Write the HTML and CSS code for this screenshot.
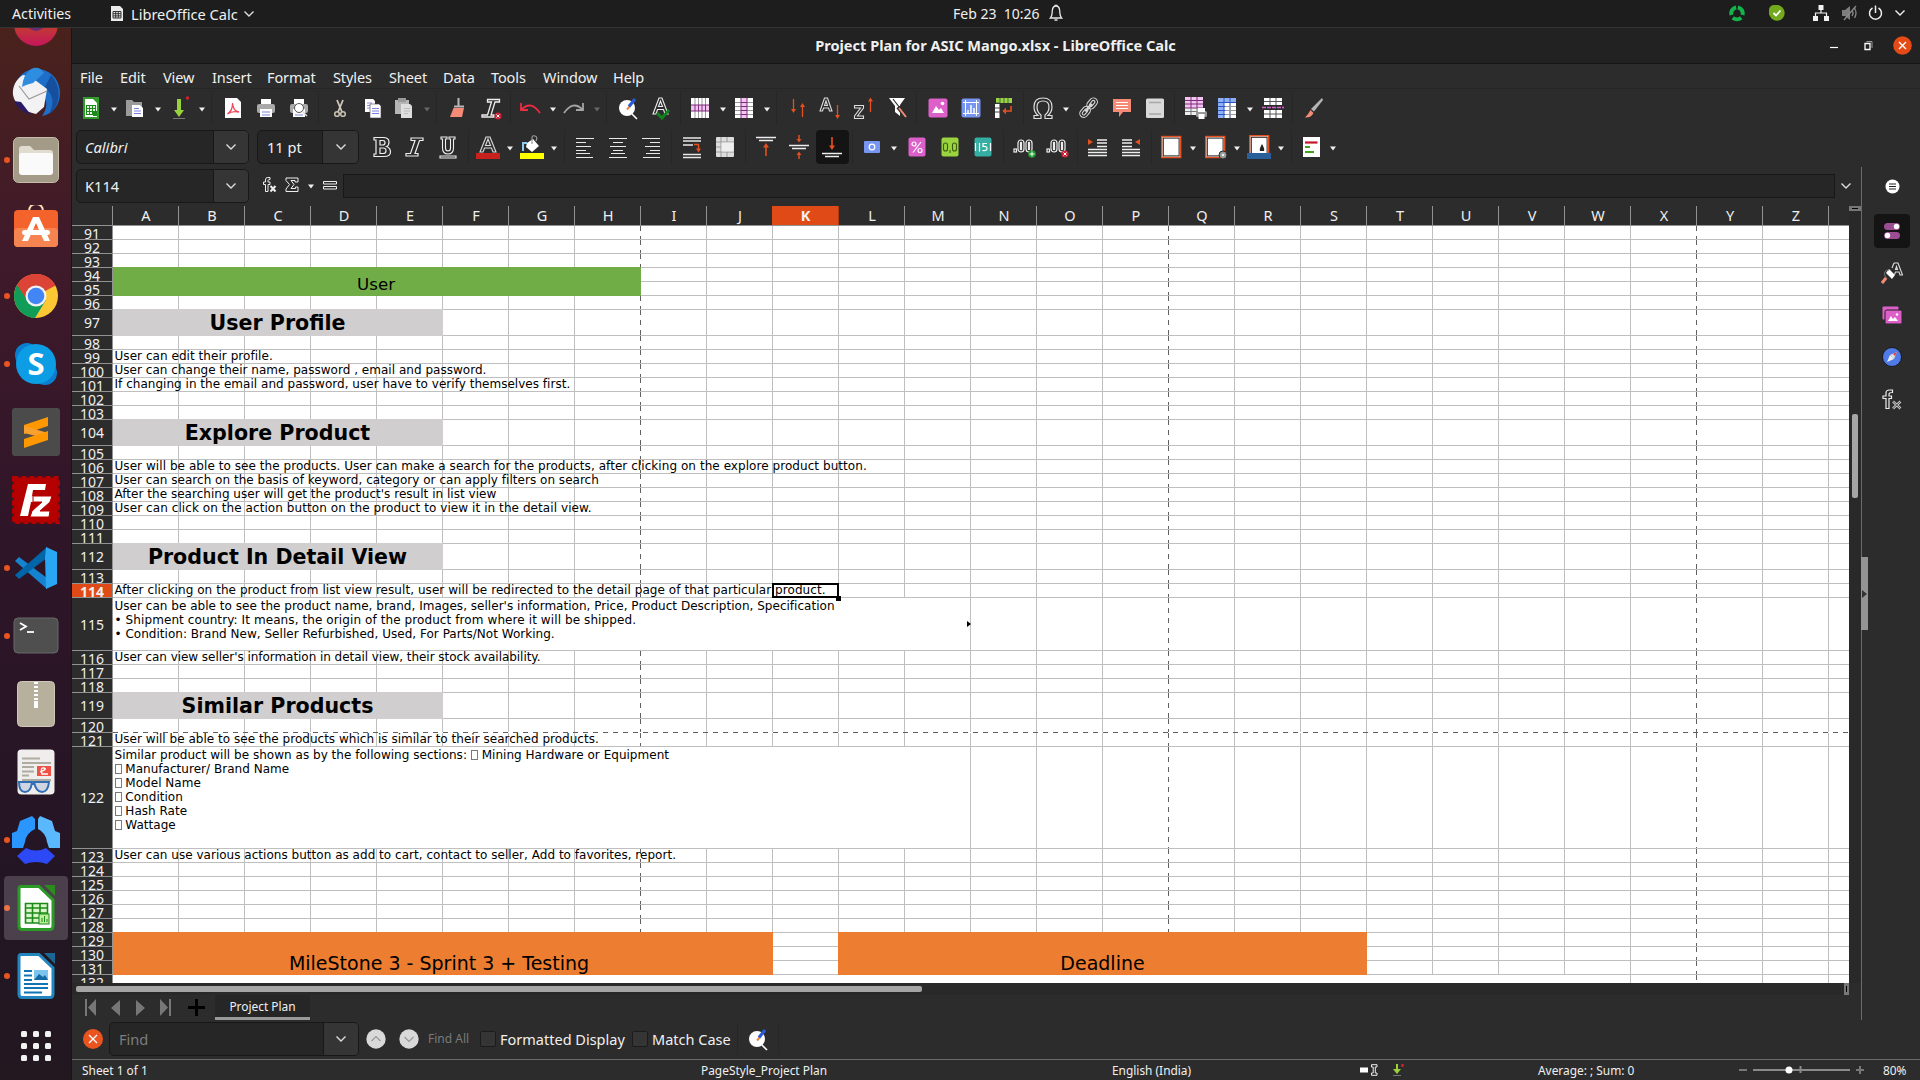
FILE: index.html
```html
<!DOCTYPE html>
<html lang="en">
<head>
<meta charset="utf-8">
<title>Project Plan for ASIC Mango.xlsx - LibreOffice Calc</title>
<link rel="stylesheet" href="styles.css">
</head>
<body>
<svg class="sprite" width="0" height="0">
  <symbol id="arrow" viewBox="0 0 6 5"><path d="M0 0.5H6L3 4.5Z" fill="currentColor"/></symbol>
  <symbol id="chev" viewBox="0 0 12 8"><path d="M1.5 1.5L6 6L10.5 1.5" fill="none" stroke="currentColor" stroke-width="1.4"/></symbol>
  <symbol id="findrep" viewBox="0 0 24 24"><circle cx="11" cy="12" r="8" fill="#fff"/><path d="M16 18L21 23" stroke="#fff" stroke-width="1.6"/><path d="M11 13.5L14 10" stroke="#f0883a" stroke-width="2"/><path d="M13 10.5L19 3" stroke="#2a5bd7" stroke-width="3.2"/></symbol>
  <symbol id="sheetrows" viewBox="0 0 24 24"><rect x="3" y="2" width="18" height="20" fill="#fff"/><path d="M7 2V22M10.500 2V22M14 2V22M17.500 2V22" stroke="#999"/><rect x="3" y="9" width="18" height="6" fill="#f3c4f0"/><path d="M3 9H21M3 15H21M7 9V15M10.500 9V15M14 9V15M17.500 9V15" stroke="#7c2d7a"/></symbol>
  <symbol id="sheetcols" viewBox="0 0 24 24"><rect x="3" y="2" width="18" height="20" fill="#fff"/><path d="M3 6.500H21M3 10.500H21M3 14.500H21M3 18.500H21" stroke="#999"/><rect x="9" y="2" width="6" height="20" fill="#f3c4f0"/><path d="M9 2V22M15 2V22M9 6.500H15M9 10.500H15M9 14.500H15M9 18.500H15" stroke="#7c2d7a"/></symbol>
</svg>

<header class="topbar">
  <span class="activities">Activities</span>
  <span class="appmenu">
    <svg width="12" height="15" viewBox="0 0 12 15"><path d="M0 0H9L12 3V15H0Z" fill="#ececec"/><path d="M2 5.500H10V12H2ZM2 7.700H10M2 9.900H10M4.700 5.500V12M7.300 5.500V12" fill="none" stroke="#333"/></svg>
    LibreOffice Calc
    <svg width="12" height="8"><use href="#chev"/></svg>
  </span>
  <span class="clock">Feb 23&nbsp; 10:26
    <svg width="14" height="18" viewBox="0 0 14 18"><path d="M1.500 14H12.500C10.500 12 11 9 10.700 6.500C10.400 3.500 9 2 7 2S3.600 3.500 3.300 6.500C3 9 3.500 12 1.500 14ZM5.500 16H8.500M5.500 1.500H8.500" fill="none" stroke="#e8e8e8" stroke-width="1.300"/></svg>
  </span>
  <span class="tray">
    <svg width="18" height="18" viewBox="0 0 18 18"><g fill="none" stroke="#15b34c" stroke-width="4"><path d="M9.800 3.500A6 6 0 0 1 14.600 11"/><path d="M8.200 3.500A6 6 0 0 0 3.400 11"/><path d="M4.800 13.800A6.500 6.500 0 0 0 13.200 13.800"/></g></svg>
    <svg width="18" height="18" viewBox="0 0 18 18"><rect x="1" y="1" width="13" height="13" rx="5" fill="#73a91d"/><circle cx="9" cy="9" r="7.700" fill="#73a91d"/><path d="M5.500 9L8 11.500L12.500 6.500" fill="none" stroke="#fff" stroke-width="1.800"/></svg>
    <svg width="16" height="16" viewBox="0 0 16 16"><g fill="#f2f2f2"><rect x="5.500" y="0" width="5" height="5"/><rect x="0" y="11" width="5" height="5"/><rect x="11" y="11" width="5" height="5"/></g><path d="M8 5V8M2.500 11V8H13.500V11" fill="none" stroke="#f2f2f2" stroke-width="1.200"/></svg>
    <svg width="16" height="16" viewBox="0 0 16 16"><path d="M0 5H3L8 1V15L3 11H0Z" fill="#7d7d7d"/><path d="M10 5Q12 8 10 11M12.500 3Q15.500 8 12.500 13M14 1L2 15" fill="none" stroke="#8a8a8a" stroke-width="1.300"/></svg>
    <svg width="15" height="16" viewBox="0 0 15 16"><path d="M4.500 3A6 6 0 1 0 10.500 3M7.500 0.500V8" fill="none" stroke="#eee" stroke-width="1.500"/></svg>
    <svg width="12" height="8"><use href="#chev"/></svg>
  </span>
</header>

<div class="desktop">
<nav class="dock">
  <div class="app"><svg width="48" height="48" viewBox="0 0 48 48"><defs><linearGradient id="fx" x1="0" y1="0" x2="0" y2="1"><stop offset=".5" stop-color="#c0402a"/><stop offset="1" stop-color="#c6155e"/></linearGradient></defs><circle cx="24" cy="24" r="22" fill="url(#fx)"/><circle cx="24" cy="21" r="10" fill="#6d2c70"/></svg></div>
  <div class="app"><svg width="50" height="50" viewBox="0 0 50 50"><path d="M25 2C40 2 49 13 49 26C49 38 42 47 31 49C36 42 36 36 34 32L6 14C10 6 17 2 25 2Z" fill="#1f6fc9"/><path d="M40 8C50 18 51 38 38 47C44 36 42 28 34 20Z" fill="#164f9e"/><path d="M2 28C1 20 5 12 12 8L20 10L36 22L33 40L25 47C12 44 4 38 2 28Z" fill="#f2f2f4"/><path d="M8 19L18 32L36 24" fill="none" stroke="#999" stroke-width="1.200"/><path d="M20 2Q28 -2 33 6L22 16Q14 18 11 20Q12 8 20 2Z" fill="#2f8de0"/><path d="M3 34Q8 44 20 48L10 35Z" fill="#2a1a66"/></svg></div>
  <div class="app run"><svg width="46" height="46" viewBox="0 0 46 46"><rect x=".5" y=".5" width="45" height="45" rx="5" fill="#a39b87" stroke="#c5bda9"/><path d="M6 12Q6 9 9 9H17L21 13H37Q40 13 40 16V20H6Z" fill="#e0dccf"/><rect x="6" y="16" width="34" height="22" rx="3" fill="#fafafa"/></svg></div>
  <div class="app"><svg width="46" height="46" viewBox="0 0 46 46"><path d="M16 7Q16 -1 23 -1T30 7" fill="none" stroke="#f4dcb4" stroke-width="2"/><rect x="1" y="5" width="44" height="37" rx="4" fill="#f4632c"/><rect x="1" y="23" width="44" height="19" rx="4" fill="#f68450"/><path d="M20 12H26L37 36H31L23 18L15 36H9Z" fill="#fff"/><rect x="9" y="25" width="28" height="5" rx="2.500" fill="#fff"/></svg></div>
  <div class="app run"><svg width="46" height="46" viewBox="0 0 46 46"><circle cx="23" cy="23" r="22" fill="#fcc934"/><path d="M23 23L42.500 12.500A22 22 0 0 0 4 12Z" fill="#db4437"/><path d="M23 23L4 12A22 22 0 0 0 22 45L33 27Z" fill="#0f9d58"/><path d="M23 13H42.700A22 22 0 0 0 4 12L14 27Z" fill="#db4437"/><circle cx="23" cy="23" r="10.500" fill="#f1f1f1"/><circle cx="23" cy="23" r="8.300" fill="#4285f4"/></svg></div>
  <div class="app run"><svg width="46" height="46" viewBox="0 0 46 46"><circle cx="14" cy="14" r="12" fill="#0a7fd0"/><circle cx="32" cy="32" r="12" fill="#0a7fd0"/><circle cx="23" cy="23" r="20" fill="#0c9de4"/><text x="23" y="34" class="logo" font-size="31">S</text></svg></div>
  <div class="app"><svg width="48" height="48" viewBox="0 0 48 48"><rect width="48" height="48" rx="3" fill="#4b4b4b"/><path d="M12 17L36 9V18L12 26Z" fill="#ff9800"/><path d="M12 18L36 25V31L12 25Z" fill="#f9a12f"/><path d="M12 31L36 23V32L12 40Z" fill="#ff9800"/></svg></div>
  <div class="app"><svg width="48" height="48" viewBox="0 0 48 48"><rect x="1.500" y="1.500" width="45" height="45" fill="#b50000" stroke="#b50000" stroke-width="3" stroke-dasharray="5 3"/><path d="M16 8H34L33 14H21L20 20H29L28 26H19L16 40H8Z" fill="#fff"/><path d="M21 20H40L38 26L28 35H38L37 41H18L20 35L30 26H21Z" fill="#fff" stroke="#b50000"/></svg></div>
  <div class="app run"><svg width="44" height="44" viewBox="0 0 44 44"><path d="M1 15L5 11L33 32V43Z" fill="#1583d0"/><path d="M1 29L5 33L33 12V1Z" fill="#0065a9"/><path d="M32 1L43 6V38L32 43L31 12Z" fill="#2aa7f2"/></svg></div>
  <div class="app run"><svg width="46" height="38" viewBox="0 0 46 38"><rect x="1" y="1" width="44" height="35" rx="4" fill="#4f4f4f" stroke="#686868"/><path d="M7 6L13 9.500L7 13" fill="none" stroke="#fff" stroke-width="1.800"/><path d="M14 15H21" stroke="#fff" stroke-width="1.800"/></svg></div>
  <div class="app"><svg width="38" height="46" viewBox="0 0 38 46"><rect x=".5" y=".5" width="37" height="45" rx="4" fill="#b7b09d" stroke="#cfc9b8"/><path d="M19 1V21" stroke="#fff" stroke-width="4" stroke-dasharray="2 2"/><rect x="17" y="20" width="4" height="7" fill="#fff"/></svg></div>
  <div class="app"><svg width="38" height="46" viewBox="0 0 38 46"><rect x=".5" y=".5" width="37" height="45" rx="4" fill="#efeeec"/><path d="M5 9.500H23M5 14H34M5 18H17M5 22.500H17M5 26.500H12M5 31H34" stroke="#b0aba0" stroke-width="2"/><rect x="20" y="17" width="14" height="10" fill="#ee5145"/><path d="M23 23Q31 20 27 19T25 25H31" fill="none" stroke="#fff" stroke-width="1.300"/><path d="M2 33H15Q14 43 8 43T2 33ZM17 33H32Q31 43 25 43T17 33ZM15 35H18" fill="#cfd6e2" stroke="#2f6db5" stroke-width="2"/></svg></div>
  <div class="app run"><svg width="50" height="50" viewBox="0 0 50 50"><path d="M9 6L21 1L24 4V14Q15 18 14 27L12 33H1V18L6 16Z" fill="#2a96ff"/><path d="M41 6L29 1L27 4V14Q35 18 36 27L38 33H49V18L44 16Z" fill="#5ab8ff"/><path d="M6 41L15 33Q25 38 35 33L44 41L36 49Q25 45 14 49Z" fill="#2d49f5"/></svg></div>
  <div class="app run active"><svg width="38" height="46" viewBox="0 0 38 46"><path d="M4 1.500H22L36 15V41Q36 44.500 33 44.500H5Q2 44.500 2 41V4Q2 1.500 4 1.500Z" fill="#fff" stroke="#2c9a26" stroke-width="3"/><path d="M27 0H38V11Z" fill="#2c8a1e"/><path d="M8.500 18.500H30.500V38H8.500ZM8.500 23H30.500M8.500 28H30.500M8.500 33H30.500M15.500 18.500V38M23 18.500V38" fill="#d9f7cb" stroke="#1c8a18" stroke-width="1.600"/><rect x="22" y="29" width="10" height="10" fill="#b9ee9a" stroke="#1c8a18"/><path d="M25 37V33M27.500 37V31M30 37V34" stroke="#1c8a18"/></svg></div>
  <div class="app run"><svg width="38" height="46" viewBox="0 0 38 46"><path d="M4 1.500H22L36 15V41Q36 44.500 33 44.500H5Q2 44.500 2 41V4Q2 1.500 4 1.500Z" fill="#fff" stroke="#2285bd" stroke-width="3"/><path d="M27 0H38V11Z" fill="#1a6796"/><path d="M7 18H15M7 22.500H15M7 27H15M7 31H31M7 35H31M7 39.500H25" stroke="#0f75b5" stroke-width="2"/><rect x="17" y="17" width="14" height="10" fill="#7cc4ee"/><path d="M17 27L22 21L26 24L28 22L31 27Z" fill="#1268a3"/></svg></div>
  <div class="app"><svg width="30" height="30" viewBox="0 0 30 30" fill="#f2f2f2"><rect width="6" height="6" rx="1.500"/><rect x="12" width="6" height="6" rx="1.500"/><rect x="24" width="6" height="6" rx="1.500"/><rect y="12" width="6" height="6" rx="1.500"/><rect x="12" y="12" width="6" height="6" rx="1.500"/><rect x="24" y="12" width="6" height="6" rx="1.500"/><rect y="24" width="6" height="6" rx="1.500"/><rect x="12" y="24" width="6" height="6" rx="1.500"/><rect x="24" y="24" width="6" height="6" rx="1.500"/></svg></div>
</nav>

<main class="window">
  <div class="titlebar">
    <span class="title">Project Plan for ASIC Mango.xlsx - LibreOffice Calc</span>
    <span class="controls">
      <svg width="8" height="16" viewBox="0 0 8 16"><path d="M0 10.500H8" stroke="#fff" stroke-width="1.200"/></svg>
      <svg width="9" height="12" viewBox="0 0 9 12"><path d="M1 4.500H6V10.500H1Z" fill="none" stroke="#fff" stroke-width="1.300"/><path d="M2.500 2.500H8V9" fill="none" stroke="#999"/></svg>
      <svg width="19" height="19" viewBox="0 0 19 19"><circle cx="9.500" cy="9.500" r="9.300" fill="#e54b17"/><path d="M6 6L13 13M13 6L6 13" stroke="#fff" stroke-width="1.400"/></svg>
    </span>
  </div>
  <div class="menubar"><span class="m1">File</span><span class="m2">Edit</span><span class="m3">View</span><span class="m4">Insert</span><span class="m5">Format</span><span class="m6">Styles</span><span class="m7">Sheet</span><span class="m8">Data</span><span class="m9">Tools</span><span class="m10">Window</span><span>Help</span></div>

  <div class="toolbar standard">
    <div class="grp">
      <i class="dd"><svg class="ic" viewBox="0 0 24 24"><path d="M4 1H20V23H4Z" fill="#2f9a26"/><path d="M6 3H14L18 7V21H6Z" fill="#fff"/><path d="M7.500 9.500H16.500V18.500H7.500ZM7.500 12.500H16.500M7.500 15.500H16.500M10.500 9.500V18.500M13.500 9.500V18.500" fill="none" stroke="#1c8a18" stroke-width="1.200"/><path d="M14 15H18V20H14Z" fill="#1c8a18"/></svg><svg class="ar"><use href="#arrow"/></svg></i>
      <i class="dd"><svg class="ic" viewBox="0 0 24 24"><path d="M3 4H9L11 6H19V20H3Z" fill="#9b9b9b"/><path d="M9 9H17L20 12V21H9Z" fill="#fff"/><path d="M11 12.500H16M11 15H18M11 17.500H18" stroke="#7d83dd"/></svg><svg class="ar"><use href="#arrow"/></svg></i>
      <i class="dd"><svg class="ic" viewBox="0 0 24 24"><path d="M10 3H14V14H17L12 21L7 14H10Z" fill="#98d33b"/><path d="M6 22.500H18" stroke="#777"/><circle cx="20.500" cy="2" r="1.700" fill="#d6212f"/></svg><svg class="ar"><use href="#arrow"/></svg></i>
    </div>
    <div class="grp">
      <i><svg class="ic" viewBox="0 0 24 24"><path d="M4 2H16L20 6V22H4Z" fill="#fff"/><path d="M6.500 18Q12 14 11.500 7Q12 15 18 16Q11 14.500 6.500 18" fill="none" stroke="#f0475b" stroke-width="1.300"/></svg></i>
      <i><svg class="ic" viewBox="0 0 24 24"><path d="M7 3H17V8H7Z" fill="#fff"/><rect x="3" y="8" width="18" height="9" rx="2" fill="#a9a9a9"/><path d="M6 13H18V21H6Z" fill="#fff"/><path d="M8 16H16M8 19H16" stroke="#7d83dd"/></svg></i>
      <i><svg class="ic" viewBox="0 0 24 24"><path d="M7 3H17V8H7Z" fill="#fff"/><rect x="3" y="8" width="18" height="9" rx="2" fill="#a9a9a9"/><path d="M6 13H18V21H6Z" fill="#fff"/><path d="M8 19H16" stroke="#7d83dd"/><circle cx="12" cy="12" r="4.500" fill="#fff" stroke="#555"/><path d="M15.500 15.500L20 20" stroke="#ddd" stroke-width="1.500"/></svg></i>
    </div>
    <div class="grp">
      <i><svg class="ic" viewBox="0 0 24 24"><path d="M9 4L14 16M15 4L10 16" stroke="#cfc7ba" stroke-width="1.800"/><circle cx="9" cy="18" r="2.300" fill="none" stroke="#c5bdb0" stroke-width="1.600"/><circle cx="15" cy="18" r="2.300" fill="none" stroke="#c5bdb0" stroke-width="1.600"/></svg></i>
      <i><svg class="ic" viewBox="0 0 24 24"><path d="M4 3H12L14 5V16H4Z" fill="#fff"/><path d="M6 7H11M6 9.500H9M6 12H9" stroke="#8b90e0"/><path d="M9 8H18L20 10V22H9Z" fill="#fff" stroke="#444" stroke-width=".6"/><path d="M11 12.500H18M11 15H18M11 17.500H18" stroke="#7d83dd"/></svg></i>
      <i class="dd off"><svg class="ic" viewBox="0 0 24 24"><path d="M3 4H17V18H3Z" fill="#b5b5b5"/><rect x="6" y="2" width="8" height="4" fill="#999"/><path d="M9 8H18L20 10V22H9Z" fill="#dedede"/><path d="M12 12.500H18M12 15H18M12 17.500H16" stroke="#bbb"/></svg><svg class="ar"><use href="#arrow"/></svg></i>
    </div>
    <div class="grp">
      <i><svg class="ic" viewBox="0 0 24 24"><path d="M12.500 2V10M8 10.500H18" stroke="#b8b8b8" stroke-width="2"/><path d="M7.500 12H18L16 21H4Z" fill="#f58a76"/></svg></i>
      <i><svg class="ic" viewBox="0 0 24 24"><path d="M8.500 3.500H20.500V6H16L12 19H15V21H3V19H8.500L12.500 6H8.500Z" fill="none" stroke="#eee" stroke-width="1.300"/><circle cx="19" cy="20" r="3.500" fill="#d02236"/><path d="M17.500 18.500L20.500 21.500M20.500 18.500L17.500 21.500" stroke="#fff"/></svg></i>
    </div>
    <div class="grp">
      <i class="dd"><svg class="ic" viewBox="0 0 24 24"><path d="M3 7V14H10M3.500 13.500Q13 4 22 17" fill="none" stroke="#ef2b41" stroke-width="1.800"/></svg><svg class="ar"><use href="#arrow"/></svg></i>
      <i class="dd off"><svg class="ic" viewBox="0 0 24 24"><path d="M21 7V14H14M20.500 13.500Q11 4 2 17" fill="none" stroke="#a5a5a5" stroke-width="1.800"/></svg><svg class="ar"><use href="#arrow"/></svg></i>
    </div>
    <div class="grp">
      <i><svg class="ic"><use href="#findrep"/></svg></i>
      <i><svg class="ic" viewBox="0 0 24 24"><path d="M10 2H13L19 18H16L14.500 13.500H8.500L7 18H4ZM9.500 10.500H13.500L11.500 5Z" fill="none" stroke="#eee" stroke-width="1.100"/><path d="M8 17L13 22L20 14" fill="none" stroke="#12801e" stroke-width="3"/></svg></i>
    </div>
    <div class="grp">
      <i class="dd"><svg class="ic"><use href="#sheetrows"/></svg><svg class="ar"><use href="#arrow"/></svg></i>
      <i class="dd"><svg class="ic"><use href="#sheetcols"/></svg><svg class="ar"><use href="#arrow"/></svg></i>
    </div>
    <div class="grp">
      <i><svg class="ic" viewBox="0 0 24 24"><path d="M7.500 3V14M16.500 10V21" stroke="#e4501f" stroke-width="1.300"/><path d="M5 13H10L7.500 17ZM14 11H19L16.500 7Z" fill="#e4501f"/></svg></i>
      <i><svg class="ic" viewBox="0 0 24 24"><path d="M5.500 2H8.500L13 15H10.500L9.500 12H4.500L3.500 15H1ZM5.500 9.500H8.500L7 5Z" fill="none" stroke="#ddd" stroke-width="1.100"/><path d="M18.500 9V20" stroke="#e4501f" stroke-width="1.300"/><path d="M16 19H21L18.500 23Z" fill="#e4501f"/></svg></i>
      <i><svg class="ic" viewBox="0 0 24 24"><path d="M2.500 9.500H11.500V12L5.500 20H11.500V22.500H2.500V20L8.500 12H2.500Z" fill="none" stroke="#ddd" stroke-width="1.100"/><path d="M18.500 5V16" stroke="#e4501f" stroke-width="1.300"/><path d="M16 5.500H21L18.500 1.500Z" fill="#e4501f"/></svg></i>
      <i><svg class="ic" viewBox="0 0 24 24"><path d="M4 2H20L15 9V20L10 16V10Z" fill="#fff"/><path d="M8 3L21 20" stroke="#2c2c2c" stroke-width="1.200"/><path d="M13 11L21 21" stroke="#2c2c2c" stroke-width="4"/><path d="M14 12L21 21" stroke="#f58a76" stroke-width="2"/></svg></i>
    </div>
    <div class="grp">
      <i><svg class="ic" viewBox="0 0 24 24"><rect x="2.500" y="2.500" width="19" height="19" rx="2" fill="#dc5fca"/><path d="M6 17L10 10L13 14L15 12L18 17Z" fill="#fff"/><circle cx="16.500" cy="7.500" r="1.800" fill="#fff"/></svg></i>
      <i><svg class="ic" viewBox="0 0 24 24"><rect x="2.500" y="2.500" width="19" height="19" rx="2" fill="#7796f2"/><path d="M6.500 4V20M17.500 4V20M4 6.500H20M4 17.500H20" stroke="#fff"/><path d="M9 17V14M12 17V9M15 17V12" stroke="#fff" stroke-width="1.500"/></svg></i>
      <i><svg class="ic" viewBox="0 0 24 24"><path d="M4 2H20V7H4Z" fill="#9ad43f"/><path d="M8 2V7M12 2V7M16 2V7M4 7H8" stroke="#355" stroke-width=".8"/><path d="M3 8H7.500V22H3Z" fill="#fff"/><path d="M3 12H8M3 16H8" stroke="#444"/><path d="M19 10V15H13" fill="none" stroke="#e4501f" stroke-width="1.600"/><path d="M14 11.500V18.500L10.500 15Z" fill="#e4501f"/></svg></i>
    </div>
    <div class="grp">
      <i class="dd"><svg class="ic" viewBox="0 0 24 24"><path d="M3 19.500H7Q3 16 3 11Q3 2 12 2T21 11Q21 16 17 19.500H21V22.500H14V19Q18 16 18 11Q18 5 12 5T6 11Q6 16 10 19V22.500H3Z" fill="none" stroke="#ddd" stroke-width="1.200"/></svg><svg class="ar"><use href="#arrow"/></svg></i>
      <i><svg class="ic" viewBox="0 0 24 24"><g transform="rotate(-50 12 12)" fill="none" stroke="#d5d5d5" stroke-width="1.100"><rect x="0.500" y="7.500" width="12" height="8" rx="4"/><rect x="3" y="10" width="7" height="3" rx="1.500"/><rect x="11.500" y="7.500" width="12" height="8" rx="4"/><rect x="14" y="10" width="7" height="3" rx="1.500"/><path d="M7 11.500H17" stroke-width="2.500"/></g></svg></i>
      <i><svg class="ic" viewBox="0 0 24 24"><path d="M3 3H21V16H13L9 21V16H3Z" fill="#f58a76"/><path d="M6 6.500H18M6 9.500H18M6 12.500H18" stroke="#fff"/></svg></i>
      <i><svg class="ic" viewBox="0 0 24 24"><rect x="3" y="2.500" width="18" height="19.500" rx="1.500" fill="#dadada"/><path d="M6 6.500H18M6 18H18" stroke="#a8a8a8" stroke-width="1.500"/></svg></i>
    </div>
    <div class="grp">
      <i><svg class="ic" viewBox="0 0 24 24"><rect x="1" y="1" width="18" height="11" fill="#f3c4f0"/><rect x="1" y="12" width="18" height="7" fill="#eee"/><path d="M1 4.500H19M1 8H19M1 12H19M7 1V12M13 1V12" stroke="#7c2d7a"/><path d="M1 15.500H19M7 12V19M13 12V19" stroke="#777"/><rect x="12" y="15" width="11" height="6" rx="1.500" fill="#999"/><rect x="14" y="12" width="7" height="4" fill="#fff"/><rect x="14.500" y="18" width="6" height="5" fill="#fff"/></svg></i>
      <i class="dd"><svg class="ic" viewBox="0 0 24 24"><rect x="3" y="2" width="18" height="20" fill="#fff"/><path d="M3 2H21V6H9V22H3Z" fill="#8fb0f4"/><path d="M3 6.500H21M3 10.500H21M3 14.500H21M3 18.500H21M9 2V22M15 2V22" stroke="#2a55c4"/><path d="M10 10.500H21M10 14.500H21M10 18.500H21M15 7V22" stroke="#999"/></svg><svg class="ar"><use href="#arrow"/></svg></i>
      <i><svg class="ic" viewBox="0 0 24 24"><path d="M3 2H21V9H3ZM3 14H21V22H3Z" fill="#fff"/><path d="M3 5.500H21M3 18H21M9 2V9M15 2V9M9 14V22M15 14V22" stroke="#555"/><path d="M1 11.500H23" stroke="#d45fc5" stroke-width="1.600" stroke-dasharray="4 1"/></svg></i>
    </div>
    <div class="grp">
      <i><svg class="ic" viewBox="0 0 24 24"><path d="M20 2L9 13L12 15.500L21 4Z" fill="#b5b5b5"/><path d="M8.500 14L11.500 17Q9 22 3 21.500Q6 19 8.500 14Z" fill="#f58a76"/></svg></i>
    </div>
  </div>

  <div class="toolbar format">
    <div class="combo font"><span class="ital">Calibri</span><b><svg width="12" height="8"><use href="#chev"/></svg></b></div>
    <div class="combo size"><span>11 pt</span><b><svg width="12" height="8"><use href="#chev"/></svg></b></div>
    <div class="grp">
      <i><svg class="ic" viewBox="0 0 24 24"><path d="M4 2.500H13Q19 2.500 19 7Q19 10.500 16.500 11.500Q20.500 13 20.500 17Q20.500 21.500 14 21.500H4V19H6V5H4ZM10 5.500V10H12.500Q15 10 15 7.700T12.500 5.500ZM10 13V18.500H13Q16 18.500 16 15.700T13 13Z" fill="none" stroke="#eee" stroke-width="1.200"/></svg></i>
      <i><svg class="ic" viewBox="0 0 24 24"><path d="M8 3H20V5.500H16.500L12 18.500H15V21H3V18.500H7.500L12 5.500H8Z" fill="none" stroke="#eee" stroke-width="1.200"/></svg></i>
      <i><svg class="ic" viewBox="0 0 24 24"><path d="M5 2H11V4H9.500V13Q9.500 16 12 16T14.500 13V4H13V2H19V4H17.500V13Q17.500 19 12 19T6.500 13V4H5ZM4 21H20V23H4Z" fill="none" stroke="#eee" stroke-width="1.100"/></svg></i>
    </div>
    <div class="grp">
      <i class="dd"><svg class="ic" viewBox="0 0 24 24"><path d="M10 2H14L20 17H17L15.500 13H8.500L7 17H4ZM9.500 10.500H14.500L12 4Z" fill="none" stroke="#ddd" stroke-width="1.100"/><rect y="18" width="24" height="6" fill="#c9211e"/></svg><svg class="ar"><use href="#arrow"/></svg></i>
      <i class="dd"><svg class="ic" viewBox="0 0 24 24"><path d="M7 8L13 4L19 11L12 17L6 12Z" fill="#fff"/><path d="M12 9V3Q12 0 15 1T16 6" fill="none" stroke="#999" stroke-width="1.200"/><path d="M3 16V8H7" fill="none" stroke="#8fcaf0" stroke-width="2"/><rect y="18" width="24" height="6" fill="#ff0"/></svg><svg class="ar"><use href="#arrow"/></svg></i>
    </div>
    <div class="grp">
      <i><svg class="ic" viewBox="0 0 24 24"><path d="M3 3.500H21M3 7.500H13M3 11.500H18M3 15.500H13M3 18.500H17M3 22.500H20" stroke="#e8e8e8" stroke-width="1.200"/></svg></i>
      <i><svg class="ic" viewBox="0 0 24 24"><path d="M3 3.500H21M7 7.500H17M4 11.500H20M7 15.500H17M5 18.500H19M3 22.500H21" stroke="#e8e8e8" stroke-width="1.200"/></svg></i>
      <i><svg class="ic" viewBox="0 0 24 24"><path d="M3 3.500H21M11 7.500H21M6 11.500H21M11 15.500H21M7 18.500H21M4 22.500H21" stroke="#e8e8e8" stroke-width="1.200"/></svg></i>
    </div>
    <div class="grp">
      <i><svg class="ic" viewBox="0 0 24 24"><path d="M3 3H21M3 6H21M3 10H13M3 19.500H21M3 22.500H21" stroke="#e8e8e8" stroke-width="1.500"/><path d="M14 9.500H18.500V14" fill="none" stroke="#e4501f" stroke-width="1.500"/><path d="M16 13.500H21L18.500 17.500Z" fill="#e4501f"/></svg></i>
      <i><svg class="ic" viewBox="0 0 24 24"><rect x="3" y="2" width="18" height="20" rx="1" fill="#ddd"/><path d="M3 7H21M3 17H21M8 2V22M14 2V7M14 17V22M3 12H8" stroke="#999"/><rect x="8.500" y="7.500" width="12" height="9" fill="#eee"/></svg></i>
    </div>
    <div class="grp">
      <i><svg class="ic" viewBox="0 0 24 24"><path d="M2 2.500H22M5 5.500H19" stroke="#eee" stroke-width="1.300"/><path d="M12 12V21" stroke="#e4501f" stroke-width="1.600"/><path d="M9 12.500H15L12 8Z" fill="#e4501f"/></svg></i>
      <i><svg class="ic" viewBox="0 0 24 24"><path d="M2 10.500H22M5 13.500H19" stroke="#eee" stroke-width="1.300"/><path d="M12 0V5M12 19V24" stroke="#e4501f" stroke-width="1.500"/><path d="M9.500 4H14.500L12 7.500ZM9.500 20H14.500L12 16.500Z" fill="#e4501f"/></svg></i>
      <i class="on"><svg class="ic" viewBox="0 0 24 24"><path d="M2 18.500H22M5 21.500H19" stroke="#eee" stroke-width="1.300"/><path d="M12 2V11" stroke="#e4501f" stroke-width="1.600"/><path d="M9 10.500H15L12 15Z" fill="#e4501f"/></svg></i>
    </div>
    <div class="grp">
      <i class="dd"><svg class="ic" viewBox="0 0 24 24"><rect x="4" y="6" width="16" height="12" rx="1" fill="#7796f2"/><circle cx="12" cy="12" r="2.800" fill="none" stroke="#fff" stroke-width="1.200"/></svg><svg class="ar"><use href="#arrow"/></svg></i>
      <i><svg class="ic" viewBox="0 0 24 24"><rect x="3.500" y="2.500" width="17" height="19" rx="2" fill="#dc5fca"/><circle cx="9" cy="9" r="2" fill="none" stroke="#fff" stroke-width="1.200"/><circle cx="15" cy="15.500" r="2" fill="none" stroke="#fff" stroke-width="1.200"/><path d="M16 7L8 17.500" stroke="#fff" stroke-width="1.200"/></svg></i>
      <i><svg class="ic" viewBox="0 0 24 24"><rect x="3.500" y="2.500" width="17" height="19" rx="2" fill="#9ad43f"/><rect x="5.500" y="8" width="4" height="8" rx="2" fill="none" stroke="#3d5a12" stroke-width="1.100"/><rect x="14.500" y="8" width="4" height="8" rx="2" fill="none" stroke="#3d5a12" stroke-width="1.100"/><path d="M12 15V18" stroke="#3d5a12"/></svg></i>
      <i><svg class="ic" viewBox="0 0 24 24"><rect x="3.500" y="2.500" width="17" height="19" rx="2" fill="#35aea3"/><path d="M4.500 8V16M19.500 8V16M8.500 8V16.500M16 8.500H12V11.500Q16 11 16 13.500T11.500 15.500" fill="none" stroke="#fff" stroke-width="1.200"/></svg></i>
    </div>
    <div class="grp">
      <i><svg class="ic" viewBox="0 0 24 24"><g fill="none" stroke="#eee" stroke-width="1.200"><rect x="2" y="14" width="2.500" height="3"/><rect x="6" y="5" width="6" height="12" rx="3"/><rect x="8.500" y="7.500" width="1" height="7"/><rect x="14" y="5" width="6" height="12" rx="3"/><rect x="16.500" y="7.500" width="1" height="7"/></g><circle cx="20" cy="19" r="3.800" fill="#1f9a30"/><path d="M17.500 19H22.500M20 16.500V21.500" stroke="#fff"/></svg></i>
      <i><svg class="ic" viewBox="0 0 24 24"><g fill="none" stroke="#eee" stroke-width="1.200"><rect x="2" y="14" width="2.500" height="3"/><rect x="6" y="5" width="6" height="12" rx="3"/><rect x="8.500" y="7.500" width="1" height="7"/><rect x="14" y="5" width="6" height="12" rx="3"/><rect x="16.500" y="7.500" width="1" height="7"/></g><circle cx="20" cy="19" r="3.500" fill="#d02236"/><path d="M18.500 17.500L21.500 20.500M21.500 17.500L18.500 20.500" stroke="#fff"/></svg></i>
    </div>
    <div class="grp">
      <i><svg class="ic" viewBox="0 0 24 24"><path d="M2 4L7 7L2 10Z" fill="#e4501f"/><path d="M11 5H21M11 8H21M11 11.500H21M2 14.500H21M2 17.500H21M2 20.500H21" stroke="#eee" stroke-width="1.300"/></svg></i>
      <i><svg class="ic" viewBox="0 0 24 24"><path d="M21 4L16 7L21 10Z" fill="#e4501f"/><path d="M3 5H13M3 8H13M3 11.500H13M3 14.500H21M3 17.500H21M3 20.500H21" stroke="#eee" stroke-width="1.300"/></svg></i>
    </div>
    <div class="grp">
      <i class="dd"><svg class="ic" viewBox="0 0 24 24"><rect x="2.700" y="1.500" width="19" height="21" fill="#fff" stroke="#e4501f" stroke-width="1.400"/><rect x="4.300" y="3.100" width="15.800" height="17.800" fill="none" stroke="#222"/></svg><svg class="ar"><use href="#arrow"/></svg></i>
      <i class="dd"><svg class="ic" viewBox="0 0 24 24"><rect x="2.700" y="1.500" width="19" height="21" fill="#fff" stroke="#e4501f" stroke-width="1.400"/><rect x="4.300" y="3.100" width="15.800" height="17.800" fill="none" stroke="#222"/><circle cx="20" cy="20" r="4" fill="#999" stroke="#2c2c2c"/><circle cx="20" cy="20" r="1.300" fill="#eee"/></svg><svg class="ar"><use href="#arrow"/></svg></i>
      <i class="dd"><svg class="ic" viewBox="0 0 24 24"><rect x="2.700" y="0.700" width="19" height="20" fill="#fff" stroke="#e4501f" stroke-width="1.400"/><rect x="4.300" y="2.300" width="15.800" height="17" fill="none" stroke="#222"/><path d="M15 9Q12 14 13 16H17Q18 14 15 9Z" fill="#222"/><rect y="18" width="24" height="6" fill="#2a6099"/></svg><svg class="ar"><use href="#arrow"/></svg></i>
    </div>
    <div class="grp">
      <i class="dd"><svg class="ic" viewBox="0 0 24 24"><rect x="4" y="2" width="17" height="20" fill="#fff"/><path d="M6 7.500H18.500" stroke="#c4142e" stroke-width="2.200"/><path d="M6 12H11M6 17H15" stroke="#3fa51e" stroke-width="2.200"/></svg><svg class="ar"><use href="#arrow"/></svg></i>
    </div>
  </div>

  <div class="main">
    <section class="sheet">
      <div class="formula">
        <div class="combo name"><span>K114</span><b><svg width="12" height="8"><use href="#chev"/></svg></b></div>
        <div class="ftools">
          <svg width="14" height="16" viewBox="0 0 14 16"><path d="M7 2.500V0.500H4.500Q2.500 0.500 2.500 3V5H0.500V7.500H2.500V14.500H5V7.500H7V5H5V3.500Q5 2.500 7 2.500Z" fill="none" stroke="#eee"/><path d="M7.500 9L12.500 14.500M12.500 9L7.500 14.500" stroke="#eee" stroke-width="2"/></svg>
          <svg width="14" height="16" viewBox="0 0 14 16"><path d="M1 1H13V5H10V3.500H6L9 7.500L6 11.500H10.500V10H13V14.500H1V12L4.500 7.500L1 3.500Z" fill="none" stroke="#eee"/></svg>
          <svg class="ar" width="6" height="5"><use href="#arrow"/></svg>
          <svg width="14" height="12" viewBox="0 0 14 12"><path d="M.5 2.500H13.500V5H.5ZM.5 7.500H13.500V10H.5Z" fill="none" stroke="#eee"/></svg>
        </div>
        <div class="input"></div>
        <svg class="expand" width="12" height="8"><use href="#chev"/></svg>
      </div>
      <div class="gridwrap">
        <div class="grid">
          <div class="colheads"><b class="corner"></b><b>A</b><b>B</b><b>C</b><b>D</b><b>E</b><b>F</b><b>G</b><b>H</b><b>I</b><b>J</b><b class="sel">K</b><b>L</b><b>M</b><b>N</b><b>O</b><b>P</b><b>Q</b><b>R</b><b>S</b><b>T</b><b>U</b><b>V</b><b>W</b><b>X</b><b>Y</b><b>Z</b><b class="last"></b></div>
          <div class="row"><b>91</b><div class="cells"></div></div>
          <div class="row"><b>92</b><div class="cells"></div></div>
          <div class="row"><b>93</b><div class="cells"></div></div>
          <div class="row"><b>94</b><div class="cells"><div class="fill green">User</div></div></div>
          <div class="row"><b>95</b><div class="cells"></div></div>
          <div class="row"><b>96</b><div class="cells"></div></div>
          <div class="row head"><b>97</b><div class="cells"><div class="fill gray">User Profile</div></div></div>
          <div class="row"><b>98</b><div class="cells"></div></div>
          <div class="row"><b>99</b><div class="cells">User can edit their profile.</div></div>
          <div class="row"><b>100</b><div class="cells snug">User can change their name, password , email and password.</div></div>
          <div class="row"><b>101</b><div class="cells snug">If changing in the email and password, user have to verify themselves first.</div></div>
          <div class="row"><b>102</b><div class="cells"></div></div>
          <div class="row"><b>103</b><div class="cells"></div></div>
          <div class="row head"><b>104</b><div class="cells"><div class="fill gray">Explore Product</div></div></div>
          <div class="row"><b>105</b><div class="cells"></div></div>
          <div class="row"><b>106</b><div class="cells wide">User will be able to see the products. User can make a search for the products, after clicking on the explore product button.</div></div>
          <div class="row"><b>107</b><div class="cells snug">User can search on the basis of keyword, category or can apply filters on search</div></div>
          <div class="row"><b>108</b><div class="cells snug">After the searching user will get the product's result in list view</div></div>
          <div class="row"><b>109</b><div class="cells wider">User can click on the action button on the product to view it in the detail view.</div></div>
          <div class="row"><b>110</b><div class="cells"></div></div>
          <div class="row"><b>111</b><div class="cells"></div></div>
          <div class="row head"><b>112</b><div class="cells"><div class="fill gray">Product In Detail View</div></div></div>
          <div class="row"><b>113</b><div class="cells"></div></div>
          <div class="row current"><b>114</b><div class="cells wide">After clicking on the product from list view result, user will be redirected to the detail page of that particular product.<span class="cursor"></span></div></div>
          <div class="row tall r115"><b>115</b><div class="cells"><span class="snug">User can be able to see the product name, brand, Images, seller's information, Price, Product Description, Specification</span><br><span class="widest">• Shipment country: It means, the origin of the product from where it will be shipped.</span><br><span class="snug">• Condition: Brand New, Seller Refurbished, Used, For Parts/Not Working.</span><span class="more"></span></div></div>
          <div class="row"><b>116</b><div class="cells tight">User can view seller's information in detail view, their stock availability.</div></div>
          <div class="row"><b>117</b><div class="cells"></div></div>
          <div class="row"><b>118</b><div class="cells"></div></div>
          <div class="row head"><b>119</b><div class="cells"><div class="fill gray">Similar Products</div></div></div>
          <div class="row break"><b>120</b><div class="cells"></div></div>
          <div class="row"><b>121</b><div class="cells snug">User will be able to see the products which is similar to their searched products.</div></div>
          <div class="row tall r122"><b>122</b><div class="cells snug">Similar product will be shown as by the following sections: <s></s> Mining Hardware or Equipment<br><s></s> Manufacturer/ Brand Name<br><s></s> Model Name<br><s></s> Condition<br><s></s> Hash Rate<br><s></s> Wattage</div></div>
          <div class="row"><b>123</b><div class="cells snug">User can use various actions button as add to cart, contact to seller, Add to favorites, report.</div></div>
          <div class="row"><b>124</b><div class="cells"></div></div>
          <div class="row"><b>125</b><div class="cells"></div></div>
          <div class="row"><b>126</b><div class="cells"></div></div>
          <div class="row"><b>127</b><div class="cells"></div></div>
          <div class="row"><b>128</b><div class="cells"></div></div>
          <div class="row"><b>129</b><div class="cells"><div class="fill orange mile">MileStone 3 - Sprint 3 + Testing</div><div class="fill orange dead">Deadline</div></div></div>
          <div class="row"><b>130</b><div class="cells"></div></div>
          <div class="row"><b>131</b><div class="cells"></div></div>
          <div class="row cut"><b>132</b><div class="cells"></div></div>
        </div>
        <div class="vscroll"><span class="split"></span><span class="thumb"></span></div>
      </div>
      <div class="hscroll"><span class="thumb"></span><span class="split"></span></div>
      <div class="tabs">
        <svg width="12" height="17" viewBox="0 0 12 17"><path d="M1 0V17" stroke="#777" stroke-width="2"/><path d="M11 0V17L3 8.500Z" fill="#777"/></svg>
        <svg width="9" height="16" viewBox="0 0 9 16"><path d="M9 0V16L0 8Z" fill="#777"/></svg>
        <svg width="9" height="16" viewBox="0 0 9 16"><path d="M0 0V16L9 8Z" fill="#777"/></svg>
        <svg width="12" height="17" viewBox="0 0 12 17"><path d="M11 0V17" stroke="#777" stroke-width="2"/><path d="M1 0V17L9 8.500Z" fill="#777"/></svg>
        <svg width="17" height="17" viewBox="0 0 17 17"><path d="M8.500 0V17M0 8.500H17" stroke="#000" stroke-width="3"/></svg>
        <span class="tab">Project Plan</span>
      </div>
    </section>
    <div class="splitter"><span><svg width="5" height="8" viewBox="0 0 5 8"><path d="M0 0L5 4L0 8Z" fill="#333"/></svg></span></div>
    <aside class="sidebar">
      <i><svg width="15" height="15" viewBox="0 0 15 15"><circle cx="7.500" cy="7.500" r="7" fill="#fff"/><path d="M4 5H11M4 7.500H11M4 10H11" stroke="#222" stroke-width="1.200"/></svg></i>
      <i class="on"><svg width="16" height="16" viewBox="0 0 16 16"><rect width="16" height="7" rx="3.500" fill="#9a4d92"/><circle cx="12.500" cy="3.500" r="2.700" fill="#fff"/><rect y="9" width="16" height="7" rx="3.500" fill="#9a4d92"/><circle cx="3.500" cy="12.500" r="2.700" fill="#fff"/></svg></i>
      <i><svg width="22" height="22" viewBox="0 0 22 22"><path d="M13 1H17L21.500 13H19L18 10H14.500L13.500 12.500M14.500 7.500H16.500L15.500 4.500ZM13 1L11 6" fill="none" stroke="#ddd" stroke-width="1.100"/><path d="M8 7L14 13L11 17L5 11Z" fill="#fff"/><path d="M8 8Q2 8 4 14L6 17" fill="none" stroke="#777"/><path d="M5 16L1 21" stroke="#f58a76" stroke-width="3"/></svg></i>
      <i><svg width="20" height="18" viewBox="0 0 20 18"><rect x=".5" y=".5" width="16" height="13" rx="1" fill="#dc5fca"/><rect x="3" y="4" width="17" height="14" rx="1.500" fill="#dc5fca" stroke="#222"/><path d="M6 15L9 10L11 13L13 11L16 15Z" fill="#fff"/><circle cx="15" cy="8.500" r="1.200" fill="#fff"/></svg></i>
      <i><svg width="20" height="20" viewBox="0 0 20 20"><circle cx="10" cy="10" r="9.500" fill="#4f7be8" stroke="#1a1a1a"/><path d="M5 15L8 8L12 12Z" fill="#eee"/><path d="M15 5L8 8L12 12Z" fill="#ddd"/><path d="M15 5L11 7L13 9Z" fill="#e33"/></svg></i>
      <i><svg width="20" height="21" viewBox="0 0 20 21"><path d="M10.500 3.500V1H7.500Q4 1 4 4V7H1V9.500H4V19.500H7V9.500H9.500V7H7V5Q7 3.500 10.500 3.500Z" fill="none" stroke="#eee" stroke-width="1.200"/><path d="M11 12.500L18.500 19.500M18.500 12.500L11 19.500" stroke="#ccc" stroke-width="2.500"/><path d="M11 12.500L18.500 19.500M18.500 12.500L11 19.500" stroke="#2c2c2c" stroke-width=".8"/></svg></i>
    </aside>
  </div>

  <div class="findbar">
    <svg class="close" width="20" height="20" viewBox="0 0 20 20"><circle cx="10" cy="10" r="10" fill="#e95420"/><path d="M6 6L14 14M14 6L6 14" stroke="#fff" stroke-width="1.300"/></svg>
    <div class="combo find"><span>Find</span><b><svg width="12" height="8"><use href="#chev"/></svg></b></div>
    <svg class="up" width="20" height="20" viewBox="0 0 20 20"><circle cx="10" cy="10" r="9.700" fill="#d9d9d9"/><path d="M5.500 12L10 7.500L14.500 12" fill="none" stroke="#999" stroke-width="1.200"/></svg>
    <svg class="down" width="20" height="20" viewBox="0 0 20 20"><circle cx="10" cy="10" r="9.700" fill="#d9d9d9"/><path d="M5.500 8L10 12.500L14.500 8" fill="none" stroke="#999" stroke-width="1.200"/></svg>
    <span class="findall">Find All</span>
    <span class="check"></span><span class="lbl fd">Formatted Display</span>
    <span class="check"></span><span class="lbl mc">Match Case</span>
    <span class="fr"><svg class="ic"><use href="#findrep"/></svg></span>
  </div>

  <footer class="status">
    <span class="s1">Sheet 1 of 1</span>
    <span class="s2">PageStyle_Project Plan</span>
    <span class="s3">English (India)</span>
    <span class="s4"><svg width="18" height="12" viewBox="0 0 18 12"><rect y="3.500" width="8" height="5" fill="#fff"/><path d="M11.500 .700H17V3H15.300V9H17V11.300H11.500V9H13.200V3H11.500Z" fill="none" stroke="#eee"/></svg></span>
    <span class="s5"><svg width="12" height="12" viewBox="0 0 12 12"><path d="M4 0H6V5H9L5 10L1 5H4Z" fill="#98d33b"/><path d="M1 11.500H9" stroke="#777"/><circle cx="10.500" cy="1.500" r="1.400" fill="#d6212f"/></svg></span>
    <span class="s6">Average: ; Sum: 0</span>
    <svg class="zoom" width="126" height="12" viewBox="0 0 126 12"><path d="M0 6H8" stroke="#777" stroke-width="2"/><path d="M14 6H111" stroke="#8a8a8a" stroke-width="2"/><path d="M61.500 2V9" stroke="#8a8a8a" stroke-width="2"/><circle cx="50" cy="6" r="3.500" fill="#fff"/><path d="M117 6H125M121 2V10" stroke="#777" stroke-width="2"/></svg>
    <span class="s7">80%</span>
  </footer>
</main>
</div>
</body>
</html>
```
FILE: styles.css
```css
* { box-sizing: border-box; }
body { margin: 0; width: 1920px; height: 1080px; overflow: hidden; background: #2c2c2c; color: #f0f0f0; font: 14.6px/20px "Noto Sans", "Open Sans", sans-serif; display: flex; flex-direction: column; }
svg { display: block; flex: none; }
.sprite { position: absolute; }
i { font-style: normal; }

.topbar { height: 28px; background: #1d1d1d; border-bottom: 1px solid #343434; display: grid; grid-template-columns: 953px 114px 1fr; align-items: center; grid-auto-flow: column; position: relative; z-index: 2; }
.activities { grid-area: 1 / 1; padding-left: 12px; font-size: 14.2px; }
.appmenu { grid-area: 1 / 1; padding-left: 111px; display: flex; align-items: center; gap: 8px; font-size: 14.6px; white-space: nowrap; }
.appmenu svg:last-child { margin-left: -3px; color: #ddd; }
.clock { grid-area: 1 / 2; display: flex; align-items: center; gap: 9px; white-space: nowrap; font-size: 14px; }
.clock svg { margin-top: -2px; }
.tray { grid-area: 1 / 3; display: flex; align-items: center; justify-content: flex-end; padding-right: 14px; margin-top: -1px; }
.tray svg:nth-child(1) { margin-right: 22px; }
.tray svg:nth-child(2) { margin-right: 27px; }
.tray svg:nth-child(3) { margin-right: 13px; }
.tray svg:nth-child(4) { margin-right: 10px; }
.tray svg:nth-child(5) { margin-right: 11px; }

.desktop { flex: 1; display: flex; min-height: 0; }
.dock { width: 72px; flex: none; background: linear-gradient(#4a221c, #401a2a 20%, #2e1528 50%, #241525 80%, #221820); border-right: 1px solid #1c1218; overflow: hidden; }
.app { height: 68px; display: flex; align-items: center; justify-content: center; position: relative; }
.app:first-child { margin-top: -38px; }
.app:last-child { height: 72px; }
.app.run::before { content: ""; position: absolute; left: 4px; top: 31px; width: 6px; height: 6px; border-radius: 50%; background: #e95420; }
.app.active::after { content: ""; position: absolute; left: 4px; top: 2px; width: 64px; height: 64px; border-radius: 4px; background: rgba(255,255,255,.18); }
.app.active svg { position: relative; z-index: 1; }
.logo { font-family: "Open Sans", sans-serif; font-weight: 700; fill: #fff; text-anchor: middle; }

.window { flex: 1; display: flex; flex-direction: column; min-width: 0; }
.titlebar { height: 36px; background: #222; border-bottom: 1px solid #151515; display: grid; grid-template-columns: 1fr; align-items: center; }
.title { grid-area: 1 / 1; justify-self: center; margin-left: -1px; font-weight: 700; font-size: 14.55px; margin-top: -2px; }
.controls { grid-area: 1 / 1; justify-self: end; display: flex; align-items: center; padding-right: 8px; margin-top: -1px; }
.controls svg:nth-child(1) { margin-right: 26px; }
.controls svg:nth-child(2) { margin-right: 20px; }
.menubar { height: 25px; border-bottom: 1px solid #262626; padding: 1px 0 0 8px; display: flex; align-items: center; font-size: 14.5px; }
.menubar span { width: 40px; letter-spacing: -.1px; }
.menubar .m2 { width: 43px; }
.menubar .m3 { width: 49px; }
.menubar .m4 { width: 55px; }
.menubar .m5 { width: 66px; }
.menubar .m6 { width: 56px; }
.menubar .m7 { width: 54px; }
.menubar .m8 { width: 48px; }
.menubar .m9 { width: 52px; }
.menubar .m10 { width: 70px; }

.toolbar { height: 39px; display: flex; align-items: center; padding-bottom: 2px; }
.standard { padding-left: 2px; }
.grp { height: 34px; padding: 0 4px; display: flex; align-items: center; border-right: 1px solid #272727; }
.standard .grp:first-child { padding: 0 4px 0 2px; }
.grp:last-child { border: 0; }
.grp > i { width: 33px; height: 34px; display: flex; align-items: center; justify-content: center; }
.grp > i:last-child { margin-right: -1px; }
.grp > i.dd { width: 44px; justify-content: flex-start; padding-left: 3px; }
.ic { width: 24px; height: 24px; }
.ar { width: 6px; height: 5px; color: #f0f0f0; }
.dd .ar { margin: 4px 0 0 7.500px; }
.off .ar { color: #666; }
.grp > i.on { background: #141414; border-radius: 4px; }
.format { padding-left: 4px; }
.combo { height: 34px; background: #262626; border: 1px solid #181818; border-radius: 5px; display: flex; align-items: stretch; overflow: hidden; }
.combo span { flex: 1; padding: 6px 0 0 9px; white-space: nowrap; }
.combo b { width: 35px; background: #353535; border-left: 1px solid #181818; display: flex; align-items: center; justify-content: center; color: #ddd; }
.font, .name { width: 173px; }
.size { width: 102px; margin: 0 2.500px 0 8px; }
.size b { width: 36px; }
.font .ital { font-style: italic; padding-left: 8px; }

.main { display: flex; height: 853px; }
.sheet { width: 1789px; display: flex; flex-direction: column; }
.formula { height: 39px; padding: 0 0 2px 4px; display: flex; align-items: center; }
.name span { padding-left: 8px; }
.ftools { width: 94px; display: flex; align-items: center; padding-left: 14px; margin-top: -2px; }
.ftools svg:nth-child(2) { margin-left: 8px; }
.ftools svg:nth-child(3) { margin: 4px 9px 0 9px; }
.input { width: 1492px; height: 24px; background: #262626; border: 1px solid #181818; }
.expand { margin-left: 5px; color: #ddd; }
.gridwrap { display: flex; height: 777px; }
.grid { width: 1777px; overflow: hidden; }
.colheads { display: flex; height: 20px; border-bottom: 1px solid #929292; }
.colheads b { width: 66px; flex: none; border-right: 1px solid #929292; font-weight: 400; font-size: 14.5px; line-height: 19px; text-align: center; padding-left: 1px; }
.colheads .corner { width: 41px; }
.colheads .last { border: 0; width: 20px; }
.colheads .sel { background: #e04a17; font-weight: 700; border-color: #b33b12; margin-left: -1px; width: 67px; }
.row { display: flex; height: 14px; }
.row > b { width: 41px; flex: none; border-right: 1px solid #929292; border-bottom: 1px solid #929292; font-weight: 400; font-size: 14px; line-height: 15px; text-align: center; overflow: hidden; }
.row.head { height: 26px; }
.head > b { line-height: 25px; }
.current > b { background: #e04a17; font-weight: 700; }
.r115 { height: 53px; }
.r115 > b { line-height: 53px; }
.r122 { height: 102px; }
.r122 > b { line-height: 101px; }
.row.cut { height: 8px; }
.cells {
  flex: 1; position: relative; border-bottom: 1px solid #bfbfbf; color: #000; white-space: nowrap;
  font: 12px/12px "DejaVu Sans", sans-serif; letter-spacing: .05px; padding-left: 1.500px;
  --dash: linear-gradient(#606060 50%, #fff 0);
  --cover: linear-gradient(#fff, #fff) 0 0 / 0 100% no-repeat;
  background:
    var(--cover),
    var(--dash) 527px 0 / 1px 10px repeat-y,
    var(--dash) 1055px 0 / 1px 10px repeat-y,
    var(--dash) 1583px 0 / 1px 10px repeat-y,
    repeating-linear-gradient(90deg, #fff 0 65px, #bfbfbf 65px 66px);
}
.snug { letter-spacing: .025px; }
.tight { letter-spacing: -.045px; }
.wide { letter-spacing: .06px; }
.wider { letter-spacing: .075px; }
.widest { letter-spacing: .095px; }
.tall .cells { line-height: 14px; padding-top: 1px; --cover: linear-gradient(#fff, #fff) 0 0 / 857px 100% no-repeat; }
.cut .cells { border: 0; --cover: linear-gradient(#fff, #fff) 0 0 / 1517px 100% no-repeat; }
.cut > b { border-bottom: 0; }
.break .cells { border-bottom: 0; --cover: repeating-linear-gradient(90deg, #606060 0 5px, #fff 5px 10px) 0 13px / 100% 1px no-repeat; }
.fill { position: absolute; z-index: 1; left: 0; top: -1px; text-align: center; letter-spacing: 0; }
.green { width: 528px; height: 29px; background: #70ad47; font-size: 16.67px; line-height: 36px; padding-right: 2px; }
.gray { width: 330px; height: 27px; background: #d0cece; font-size: 20.6px; font-weight: 700; line-height: 28px; padding-right: 1px; }
.orange { height: 43px; background: #ed7d31; font-size: 19px; line-height: 62px; }
.mile { width: 660px; padding-right: 8px; }
.dead { left: 725px; width: 529px; }
.cursor { position: absolute; z-index: 2; left: 659px; top: -1px; width: 67px; height: 15px; border: 2px solid #000; }
.cursor::after { content: ""; position: absolute; right: -4px; bottom: -5px; width: 5px; height: 5px; background: #000; }
.more { position: absolute; left: 854px; top: 22.500px; border: solid transparent; border-width: 3px 0 3px 4px; border-left-color: #000; }
s { display: inline-block; width: 7px; height: 10px; border: 1px solid #777; border-left-color: #a3685c; border-right-color: #5c86ad; vertical-align: -1px; }

.vscroll { width: 12px; background: #292929; }
.vscroll .split { display: block; height: 5px; background: #777; padding: 2px 3px; }
.vscroll .split::after, .hscroll .split::after { content: ""; display: block; height: 1px; background: #000; }
.vscroll .thumb { display: block; width: 6px; height: 84px; margin: 203px 0 0 3px; background: #a5a5a5; border-radius: 2px; }
.hscroll { height: 12px; display: flex; align-items: center; background: #292929; width: 1777px; padding-left: 4px; }
.hscroll .thumb { width: 846px; height: 6px; background: #a5a5a5; border-radius: 2px; }
.hscroll .split { margin-left: auto; width: 5px; height: 12px; background: #777; padding: 3px 2px; }
.hscroll .split::after { height: 6px; }
.tabs { height: 25px; display: flex; align-items: center; padding-left: 13px; }
.tabs svg:nth-child(2) { margin-left: 14px; }
.tabs svg:nth-child(3) { margin-left: 16px; }
.tabs svg:nth-child(4) { margin-left: 14px; }
.tabs svg:nth-child(5) { margin-left: 17px; }
.tab { width: 95px; height: 25px; margin-left: 10px; background: #262626; border-bottom: 3px solid #999; font-size: 11.9px; line-height: 23px; text-align: center; }

.splitter { width: 7px; border-left: 1px solid #6b6b6b; display: flex; }
.splitter span { margin: 390px 0 0 -1px; width: 7px; height: 73px; background: #949494; display: flex; align-items: center; padding-left: 1px; flex: none; }
.sidebar { width: 48px; padding-top: 2px; }
.sidebar i { height: 34px; width: 36px; margin: 0 auto 8px 6px; display: flex; align-items: center; justify-content: center; }
.sidebar i:first-child { margin-bottom: 11px; }
.sidebar i.on { background: #141414; border-radius: 4px; }

.findbar { height: 39px; display: flex; align-items: center; padding: 0 0 2px 11px; }
.find { width: 250px; margin-left: 6px; color: #7d7d7d; }
.up { margin-left: 7px; }
.down { margin-left: 13px; }
.findall { margin-left: 9px; width: 52px; color: #7a7a7a; font-size: 12px; white-space: nowrap; }
.check { width: 16px; height: 16px; border: 1px solid #1c1c1c; border-radius: 2px; background: #353535; }
.lbl { margin-left: 4px; white-space: nowrap; font-size: 14.5px; }
.fd { width: 132px; }
.mc { width: 85px; }
.fr { width: 42px; height: 32px; border: solid #272727; border-width: 0 1px; display: flex; align-items: center; justify-content: center; }
.status { flex: 1; border-top: 1px solid #6b6b6b; display: flex; align-items: center; font-size: 11.9px; line-height: 20px; padding-left: 10px; white-space: nowrap; }
.s1 { width: 619px; }
.s2 { width: 411px; }
.s3 { width: 248px; }
.s4 { width: 32px; }
.s5 { width: 146px; }
.s6 { width: 201px; }
.s7 { margin-left: 18px; }
```
